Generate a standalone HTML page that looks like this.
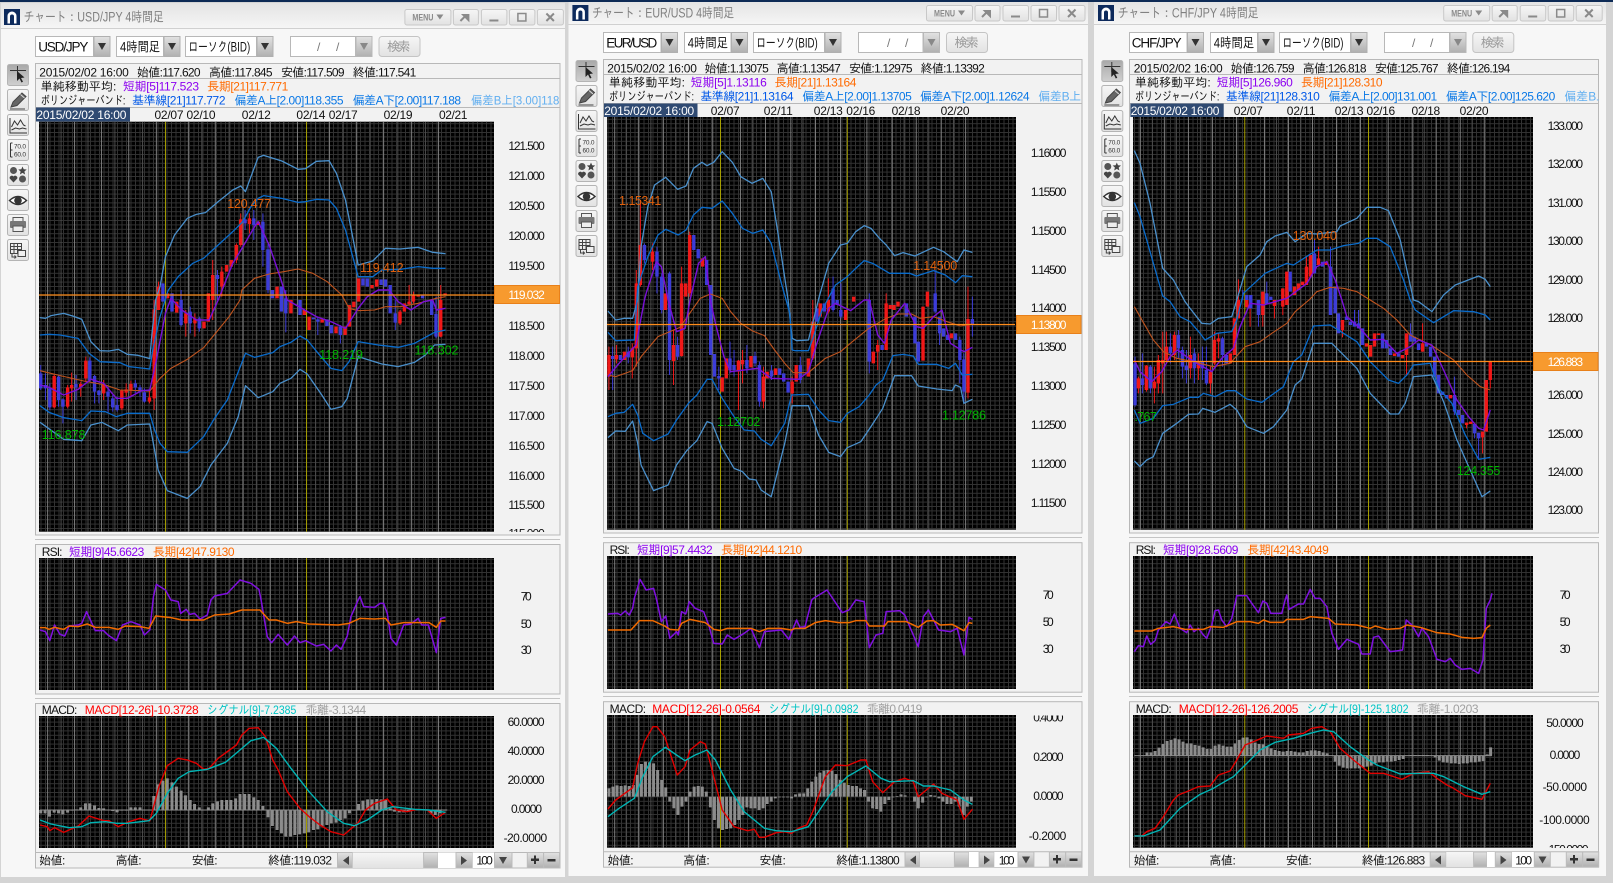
<!DOCTYPE html>
<html lang="ja"><head><meta charset="utf-8"><title>チャート</title>
<style>
html,body{margin:0;padding:0;background:#d4d4d4;overflow:hidden}
svg{display:block}
text{font-family:"Liberation Sans","IPAGothic","Noto Sans CJK JP",sans-serif;font-size:12px;fill:#111}
.l{fill:none;vector-effect:non-scaling-stroke;stroke-width:1.3;stroke-linejoin:round}
.b2{stroke:#4a90cc}.a{stroke:#0a6ccc}.m{stroke:#c0541e;stroke-width:1.1}.p{stroke:#7a10d8;stroke-width:1.4}
.rs{stroke:#8010e0;stroke-width:1.5}.rl{stroke:#f06a00;stroke-width:1.5}.mr{stroke:#e00000;stroke-width:1.4}.mc{stroke:#00b4b4;stroke-width:1.4}
.h{stroke:#8c8c8c;stroke-width:3;fill:none;vector-effect:non-scaling-stroke}
.rw{stroke:#f01818;stroke-width:1;fill:none;vector-effect:non-scaling-stroke}
.rb{stroke:#f01818;stroke-width:3.4;fill:none;vector-effect:non-scaling-stroke}
.bw{stroke:#3c3cd8;stroke-width:1;fill:none;vector-effect:non-scaling-stroke}
.bb{stroke:#3c3cd8;stroke-width:3.4;fill:none;vector-effect:non-scaling-stroke}
.v1{stroke:#7c7c7c;stroke-width:1;fill:none;vector-effect:non-scaling-stroke}
.v2{stroke:#4c4c4c;stroke-width:1;fill:none;vector-effect:non-scaling-stroke}
.vy{stroke:#a8a000;stroke-width:1;fill:none;vector-effect:non-scaling-stroke}
.pl{stroke:#ff8c1a;stroke-width:1.3;fill:none}
.pn{fill:#f2f2f2;stroke:#b8b8b8;stroke-width:1}
.sep{stroke:#c4c4c4;stroke-width:1}
.white{fill:#fff;stroke:#b8b8b8}
.pu{fill:#8c00f0}.or{fill:#ff6a00}.bl{fill:#0058e8}.ba{fill:#0a78e6}.bb2{fill:#60aef0}
.red{fill:#ff0000}.cy{fill:#00c4c4}.gy{fill:#a0a0a0}
.lo{fill:#e0600c;font-size:12.5px}.lg{fill:#00b400;font-size:12.5px}
.tt{fill:#808080;font-size:13.5px}
.wt{fill:#fff}
.dis{fill:#999;font-size:13px}
.cb{font-size:13.5px}
</style></head><body>
<svg xmlns="http://www.w3.org/2000/svg" width="1613" height="883" viewBox="0 0 1613 883">
<defs>
<pattern id="g" width="4.5" height="4.4" patternUnits="userSpaceOnUse"><path d="M0 .5H4.5M.5 0V4.4" stroke="#323232" stroke-width="1" fill="none"/></pattern>
<linearGradient id="tg" x1="0" y1="0" x2="0" y2="1"><stop offset="0" stop-color="#e4e4e4"/><stop offset="1" stop-color="#f5f5f5"/></linearGradient>
<linearGradient id="bg" x1="0" y1="0" x2="0" y2="1"><stop offset="0" stop-color="#e2e2e2"/><stop offset="1" stop-color="#b0b0b0"/></linearGradient>
<linearGradient id="lg" x1="0" y1="0" x2="0" y2="1"><stop offset="0" stop-color="#f6f6f6"/><stop offset="1" stop-color="#e2e2e2"/></linearGradient>
<linearGradient id="pg" x1="0" y1="0" x2="0" y2="1"><stop offset="0" stop-color="#a8a8a8"/><stop offset="1" stop-color="#d0d0d0"/></linearGradient>
<g id="logo"><rect width="16" height="16" fill="#0d2a5c"/><path d="M3.5 14.5V7a4.5 4.5 0 0 1 9 0v7.500h-2.500V7.500a2 2 0 0 0-4 0V14.500z" fill="#fff"/></g>
<g id="tb">
<g fill="url(#lg)" stroke="#c8c8c8"><rect x=".5" y=".5" width="46" height="15.500" rx="2"/><rect x="49" y=".5" width="25" height="15.500" rx="2"/><rect x="77" y=".5" width="25.500" height="15.500" rx="2"/><rect x="105" y=".5" width="25.500" height="15.500" rx="2"/><rect x="133" y=".5" width="26" height="15.500" rx="2"/></g>
<text x="8" y="11.500" textLength="21" lengthAdjust="spacingAndGlyphs" style="font-size:9px;font-weight:bold;fill:#8a8a8a">MENU</text>
<path d="M32 5.500h7l-3.500 5z" fill="#8a8a8a"/>
<path d="M56 12l5-5m-2-1l5 0 0 5z" stroke="#8a8a8a" stroke-width="2" fill="#8a8a8a"/>
<path d="M85 11.500h9" stroke="#8a8a8a" stroke-width="2"/>
<rect x="113.500" y="4.500" width="8" height="7.500" fill="none" stroke="#8a8a8a" stroke-width="1.500"/>
<path d="M142 4.500l7.500 7.500m0-7.500l-7.500 7.500" stroke="#8a8a8a" stroke-width="2"/>
</g>
<g id="dn"><rect x=".5" y=".5" width="16" height="20" fill="url(#bg)" stroke="#b0b0b0"/><path d="M4.500 7h8l-4 7z" fill="#333"/></g>
<g id="dnd"><rect x=".5" y=".5" width="16" height="20" fill="url(#bg)" stroke="#b8b8b8"/><path d="M4.500 7h8l-4 7z" fill="#888"/></g>
<g id="srch"><rect x=".5" y=".5" width="41" height="20" rx="3" fill="url(#lg)" stroke="#c4c4c4"/></g>
<g id="tools" fill="none">
<g stroke="#b4b4b4"><rect x=".5" y=".5" width="21" height="21" rx="2" fill="url(#pg)"/><rect x=".5" y="25.500" width="21" height="21" rx="2" fill="url(#lg)"/><rect x=".5" y="50.500" width="21" height="21" rx="2" fill="url(#lg)"/><rect x=".5" y="75.500" width="21" height="21" rx="2" fill="url(#lg)"/><rect x=".5" y="100.500" width="21" height="21" rx="2" fill="url(#lg)"/><rect x=".5" y="125.500" width="21" height="21" rx="2" fill="url(#lg)"/><rect x=".5" y="150.500" width="21" height="21" rx="2" fill="url(#lg)"/><rect x=".5" y="175.500" width="21" height="21" rx="2" fill="url(#lg)"/></g>
<path d="M3 6.500H19M10.500 2V12" stroke="#333"/><path d="M10 7l0 10 2.500-2.500 2 4 1.500-.8-2-3.700 3.500-.5z" fill="#222"/>
<path d="M4 43l2-5L15 29l4 3.500-9 9zM3 45H18" fill="#666" stroke="#444"/><path d="M13.500 30.500l4 3.500" stroke="#ddd"/>
<path d="M3 54V69H20" stroke="#333"/><path d="M4.500 63l3-6 3 4 3-5 3 5 2 1M4.500 66l4-2 4 1 3-1 4 1" stroke="#333" stroke-width="1"/>
<path d="M3.500 79V93M3.500 79h2M3.500 86h2M3.500 93h2" stroke="#333"/>
<text x="7" y="84.500" style="font-size:6.500px;fill:#333" textLength="12">70.0</text><text x="7" y="92.500" style="font-size:6.500px;fill:#333" textLength="12">60.0</text>
<circle cx="6.500" cy="106.500" r="3.500" fill="#555"/><path d="M15.500 102.500l1.200 2.800 3 .2-2.300 2 .7 3-2.600-1.600-2.600 1.600.7-3-2.300-2 3-.2z" fill="#444"/><path d="M6.500 118.500l-3.800-4a2.200 2.200 0 0 1 3.800-2 2.200 2.200 0 0 1 3.800 2z" fill="#444"/><circle cx="15.500" cy="115" r="3.500" fill="#555"/>
<path d="M2.500 136.500q8.500-8 17 0q-8.500 8-17 0z" fill="#fff" stroke="#333" stroke-width="1.500"/><circle cx="11" cy="136.500" r="3.800" fill="#333"/>
<path d="M6 157v-3.500h10V157" fill="#eee" stroke="#555"/><rect x="3" y="157" width="16" height="7" rx="1" fill="#777"/><rect x="6" y="162" width="10" height="5.500" fill="#eee" stroke="#555"/>
<g stroke="#444"><path d="M3.500 179.500h11v10h-11zM3.500 182.500h11M3.500 185.500h11M7 179.500v10M10.500 179.500v10"/><rect x="11" y="186.500" width="7.500" height="6" fill="#eee"/><path d="M5 190v3h4m-1.500-1.500l1.500 1.500-1.500 1.500"/></g>
</g>
<clipPath id="c1"><rect x="39" y="121.700" width="455" height="410"/><rect x="39" y="558" width="455" height="132"/><rect x="39" y="716" width="455" height="132"/></clipPath>
<clipPath id="c2"><rect x="607" y="117" width="409" height="412.700"/><rect x="607" y="556" width="409" height="133"/><rect x="607" y="715" width="409" height="132.700"/></clipPath>
<clipPath id="c3"><rect x="1133" y="117" width="400" height="412.700"/><rect x="1133" y="556" width="400" height="133"/><rect x="1133" y="715" width="400" height="132.700"/></clipPath>
<clipPath id="k1"><rect x="495" y="520" width="65" height="12"/></clipPath>
<clipPath id="k2"><rect x="1020" y="715.500" width="60" height="12"/></clipPath>
<clipPath id="k3"><rect x="1535" y="840" width="60" height="8"/></clipPath>
<clipPath id="k4"><rect x="1550" y="90" width="48.500" height="16"/></clipPath>
</defs>

<rect width="1613" height="883" fill="#d4d4d4"/>
<rect width="1613" height="2" fill="#0d2a55"/>

<!-- ========== WINDOW 1 ========== -->
<rect x="1" y="3" width="564" height="874" fill="#f7f7f7"/>
<rect x="1" y="3" width="564" height="25" fill="url(#tg)"/><path d="M1 28.500H565" stroke="#d0d0d0"/>
<use href="#logo" x="4" y="9"/>
<text class="tt" x="23.600" y="21.500" textLength="140" lengthAdjust="spacingAndGlyphs">チャート：USD/JPY 4時間足</text>
<use href="#tb" x="404.400" y="9"/>
<rect class="white" x="35.500" y="36.500" width="58" height="20"/><use href="#dn" x="93.500" y="36"/><text class="cb" x="38.200" y="51.500" textLength="50.200">USD/JPY</text>
<rect class="white" x="116.500" y="36.500" width="47" height="20"/><use href="#dn" x="163.500" y="36"/><text class="cb" x="120" y="51.500" textLength="40" lengthAdjust="spacingAndGlyphs">4時間足</text>
<rect class="white" x="185.500" y="36.500" width="71" height="20"/><use href="#dn" x="256.500" y="36"/><text class="cb" x="188.400" y="51.500" textLength="61.800" lengthAdjust="spacingAndGlyphs">ローソク(BID)</text>
<rect class="white" x="290.500" y="36.500" width="65" height="20"/><use href="#dnd" x="355.500" y="36"/><text x="317" y="51" fill="#777" style="fill:#777">/</text><text x="336" y="51" style="fill:#777">/</text>
<use href="#srch" x="378.500" y="36"/><text class="dis" x="387.300" y="51" textLength="23">検索</text>
<use href="#tools" x="7" y="64"/>

<rect class="pn" x="35.500" y="63.500" width="524.500" height="471.500"/>
<path d="M35.500 78.500H560M35.500 107.500H560" stroke="#b8b8b8"/>
<path class="sep" d="M35 539.500H560M35 698.500H560"/>
<rect class="pn" x="35.500" y="544.500" width="524.500" height="149.500"/>
<rect class="pn" x="35.500" y="703.500" width="524.500" height="164.500"/>
<path d="M35.500 852.500H560" stroke="#b8b8b8"/>
<rect x="36" y="107.500" width="94" height="14" fill="#2f4a72"/>
<g fill="#000"><rect x="39" y="121.700" width="455" height="410"/><rect x="39" y="558" width="455" height="132"/><rect x="39" y="716" width="455" height="132"/></g>
<g fill="url(#g)"><rect x="39" y="121.700" width="455" height="410"/><rect x="39" y="558" width="455" height="132"/><rect x="39" y="716" width="455" height="132"/></g>
<g clip-path="url(#c1)"><g transform="scale(.363636,.333333)">
<path class="v2" d="M168 365V2544M242 365V2544M316 365V2544M392 365V2544M555 365V2544M630 365V2544M705 365V2544M780 365V2544M868 365V2544M944 365V2544M1018 365V2544M1094 365V2544M1170 365V2544"/>
<path class="v1" d="M131 365V2544M205 365V2544M279 365V2544M354 365V2544M430 365V2544M518 365V2544M592 365V2544M668 365V2544M743 365V2544M818 365V2544M906 365V2544M981 365V2544M1055 365V2544M1132 365V2544M1206 365V2544"/>
<path class="vy" d="M455 365V2544M843 365V2544"/>
<path class="rw" d="M149 1122V1225M186 1155V1225M197 1118V1205M222 1145V1190M236 1070V1145M285 1140V1200M335 1168V1230M347 1150V1190M360 1142V1190M411 1170V1210M424 900V1230M436 845V930M585 780V960M610 800V890M650 730V790M662 640V740M686 640V700M1125 855V915M1137 875V910M1212 855V1012M1100 930V975M511 930V1010M536 940V1010"/>
<path class="bw" d="M112 1095V1170M125 1120V1200M137 1150V1230M161 1125V1220M173 1195V1270M209 1125V1200M247 1072V1145M260 1125V1210M272 1170V1210M297 1160V1235M310 1185V1235M322 1190V1235M372 1140V1180M385 1155V1190M397 1165V1208M498 870V980M523 920V1000M548 950V995M598 810V900M674 630V690M698 630V720M723 640V800M737 730V880M786 870V997M874 950V1005M936 975V1030M1087 900V990M1199 890V1015"/>
<path class="bb" d="M112 1120V1165M125 1155V1165M137 1165V1222M161 1130V1200M173 1198V1220M209 1152V1162M247 1082V1140M260 1128V1175M272 1172V1185M297 1175V1190M310 1195V1222M322 1215V1230M372 1150V1162M385 1162V1175M397 1177V1205M448 850V905M473 880V935M498 900V975M523 935V970M548 955V985M598 825V837M674 658V670M698 655V675M723 665V750M737 748V870M749 870V895M774 860V935M786 895V940M825 900V945M862 953V958M874 958V965M899 958V978M911 975V1000M936 980V1005M998 835V857M1010 835V860M1048 838V855M1060 838V860M1073 855V940M1087 940V968M1162 885V895M1187 900V945M1199 942V1010"/>
<path class="rb" d="M149 1128V1222M186 1162V1220M197 1155V1165M222 1152V1162M236 1082V1135M285 1155V1180M335 1172V1225M347 1168V1178M360 1152V1172M411 1192V1205M424 928V1195M436 860V930M461 880V895M486 905V938M511 940V970M536 955V970M561 965V985M573 880V965M585 825V900M610 815V860M623 795V815M636 780V800M650 735V780M662 658V735M686 655V672M711 665V675M762 860V895M800 900V940M837 930V945M850 950V990M886 958V968M924 980V1000M949 980V1005M961 915V980M973 905V922M986 835V905M1023 855V865M1036 838V860M1100 935V970M1112 910V935M1125 905V912M1137 885V905M1150 885V890M1212 900V1010M1224 880V885"/>
<polyline class="l b2" points="110,953 125,955 140,947 175,940 200,948 225,958 250,1025 275,1052 300,1053 325,1048 350,1063 380,1066 412,1076 418,1000 428,900 440,860 455,770 480,705 515,655 540,643 565,638 600,605 640,570 662,558 675,575 690,530 710,472 725,466 775,483 820,508 840,506 870,484 905,482 925,520 950,600 985,795 1025,783 1060,745 1100,747 1150,742 1190,757 1225,761"/>
<polyline class="l a" points="110,1005 135,1003 165,1005 215,1015 245,1060 275,1085 330,1088 355,1100 412,1107 420,1050 440,950 462,872 490,830 530,790 560,775 600,735 640,695 665,668 675,650 690,620 710,595 725,587 775,595 820,607 840,605 870,598 905,600 925,625 950,690 985,830 1025,830 1050,810 1100,808 1150,800 1190,805 1225,805"/>
<polyline class="l m" points="110,1112 170,1128 230,1143 290,1155 330,1170 412,1173 440,1135 470,1105 515,1078 560,1043 600,990 630,950 660,900 665,870 700,835 740,822 780,815 820,807 860,820 900,845 940,885 960,925 985,932 1030,930 1060,920 1100,920 1150,910 1200,895 1225,890"/>
<polyline class="l a" points="110,1217 135,1237 175,1253 225,1262 250,1233 290,1235 320,1250 350,1240 412,1240 425,1290 440,1330 460,1355 515,1357 560,1310 590,1255 625,1200 650,1130 675,1060 700,1072 750,1058 770,1040 800,1027 825,1008 845,1020 875,1060 910,1105 940,1112 960,1085 985,1025 1040,1035 1095,1042 1140,1030 1195,997 1225,990"/>
<polyline class="l b2" points="110,1267 175,1318 225,1322 250,1275 280,1267 325,1292 350,1275 412,1272 435,1410 460,1472 515,1495 550,1460 580,1395 625,1330 655,1250 675,1157 710,1193 750,1175 770,1150 800,1135 825,1108 845,1122 885,1185 910,1228 940,1220 955,1195 985,1070 1050,1092 1095,1100 1140,1087 1170,1065 1195,1035 1225,1033"/>
<polyline class="l p" points="110,1155 135,1162 175,1185 215,1168 250,1138 285,1150 320,1195 350,1195 390,1172 412,1170 430,1080 455,940 470,895 500,930 540,960 575,960 600,900 640,790 660,755 700,680 710,665 740,735 770,830 790,900 830,925 870,950 910,965 950,985 985,925 1010,890 1040,870 1070,870 1095,905 1130,930 1165,905 1190,900 1200,930 1225,925"/>
<polyline class="l rs" points="110,1890 125,1895 137,1922 150,1875 165,1903 178,1908 190,1878 215,1875 225,1870 238,1835 262,1892 285,1892 297,1905 320,1922 337,1875 360,1865 385,1875 397,1905 412,1890 422,1790 430,1753 455,1770 470,1800 490,1805 497,1840 512,1828 522,1843 535,1840 550,1857 570,1845 580,1800 590,1788 625,1780 660,1740 690,1750 712,1768 718,1800 735,1910 747,1928 765,1903 790,1935 810,1908 825,1928 840,1922 870,1938 890,1933 910,1953 925,1935 938,1948 955,1908 965,1850 985,1800 990,1790 1000,1820 1030,1822 1045,1810 1055,1810 1065,1840 1075,1915 1090,1935 1110,1875 1130,1872 1150,1855 1160,1875 1178,1875 1200,1958 1212,1855 1225,1852"/>
<g transform="translate(0,1800)">
<polyline class="l rl" points="110,83 125,83 135,88 150,82 175,88 190,78 215,80 240,72 262,82 300,82 325,88 345,78 385,80 410,85 428,48 470,53 500,60 560,60 590,45 630,42 665,30 715,30 740,60 760,60 790,70 815,65 850,72 930,75 960,70 990,55 1030,57 1060,55 1075,75 1110,68 1180,68 1200,82 1212,63 1225,63"/>
<path class="h" d="M112 630V640M124 630V640M136 630V650M149 630V638M161 630V640M173 630V643M186 630V638M198 630V632M210 630V628M222 630V622M235 630V610M247 630V610M260 630V616M272 630V624M285 630V625M297 630V631M310 630V633M322 630V637M335 630V632M347 630V632M360 630V622M372 630V622M385 630V622M397 630V630M410 630V630M423 630V588M435 630V553M448 630V542M460 630V535M473 630V547M485 630V560M498 630V572M510 630V586M523 630V600M535 630V612M548 630V622M560 630V630M573 630V622M585 630V610M598 630V604M610 630V600M623 630V600M635 630V600M648 630V595M660 630V582M673 630V582M685 630V582M698 630V592M710 630V600M723 630V618M737 630V652M749 630V678M762 630V690M774 630V700M786 630V710M799 630V710M811 630V705M824 630V703M837 630V700M849 630V697M862 630V690M874 630V688M886 630V680M899 630V675M911 630V670M924 630V668M936 630V660M949 630V655M961 630V640M973 630V632M986 630V612M998 630V602M1011 630V598M1023 630V598M1036 630V597M1048 630V598M1060 630V600M1073 630V625M1085 630V635M1098 630V637M1110 630V637M1123 630V635M1135 630V632M1172 630V632M1185 630V640M1197 630V645M1210 630V640M1222 630V632"/>
<path class="h" style="stroke-width:1" d="M110 630H1230"/>
<polyline class="l mr" points="110,675 130,680 137,692 150,683 175,697 215,678 245,648 285,662 300,662 325,680 355,665 385,655 412,663 437,560 460,497 490,475 515,480 540,490 560,508 575,505 600,475 650,435 665,405 685,385 710,383 730,410 750,480 765,510 790,575 825,625 850,650 880,675 910,695 945,705 985,668 1005,630 1030,610 1065,597 1090,630 1120,635 1145,628 1175,630 1200,655 1225,637"/>
<polyline class="l mc" points="110,660 140,672 190,683 225,680 250,668 290,665 320,670 350,670 410,662 430,640 460,580 490,535 520,515 570,508 620,487 660,450 690,422 725,412 760,445 800,505 850,575 900,635 945,670 975,677 1010,660 1050,630 1080,620 1140,628 1180,630 1225,637"/>
</g></g></g>
<path class="pl" d="M39 295H494"/>
<rect x="494.500" y="285.500" width="65" height="18" fill="#f79a2e" stroke="#e8801a"/>
<text class="wt" x="508.400" y="299" textLength="36.400" style="fill:#fff">119.032</text>
<text class="lo" x="227.300" y="208" textLength="43.600">120.477</text><text class="lo" x="360" y="272" textLength="43.600">119.412</text>
<text class="lg" x="319.300" y="359" textLength="43.600">118.219</text><text class="lg" x="414.500" y="354.500" textLength="44">118.302</text><text class="lg" x="41.800" y="439" textLength="43.600">116.878</text>
<text x="39.300" y="76.500" textLength="89.500">2015/02/02 16:00</text><text x="137" y="76.500" textLength="63.600">始値:117.620</text><text x="209" y="76.500" textLength="63.600">高値:117.845</text><text x="281" y="76.500" textLength="63.600">安値:117.509</text><text x="352.700" y="76.500" textLength="63.600">終値:117.541</text>
<text x="40.700" y="90.500" textLength="75.600">単純移動平均:</text><text class="pu" x="123" y="90.500" textLength="76">短期[5]117.523</text><text class="or" x="207.300" y="90.500" textLength="81">長期[21]117.771</text>
<text x="40.700" y="104.500" textLength="84.700" lengthAdjust="spacingAndGlyphs">ボリンジャーバンド:</text><text class="bl" x="132" y="104.500" textLength="93.500">基準線[21]117.772</text><text class="ba" x="234.500" y="104.500" textLength="109">偏差A上[2.00]118.355</text><text class="ba" x="352.700" y="104.500" textLength="108.400">偏差A下[2.00]117.188</text><text class="bb2" x="471" y="104.500" textLength="88.400" lengthAdjust="spacingAndGlyphs">偏差B上[3.00]118</text>
<text class="wt" x="36.400" y="119" textLength="90">2015/02/02 16:00</text><text x="154.500" y="119" textLength="29">02/07</text><text x="186.500" y="119" textLength="29">02/10</text><text x="241.800" y="119" textLength="29">02/12</text><text x="296.400" y="119" textLength="29">02/14</text><text x="328.700" y="119" textLength="29">02/17</text><text x="383.600" y="119" textLength="29">02/19</text><text x="439" y="119" textLength="28.400">02/21</text>
<text x="508.400" y="150.200" textLength="36.400">121.500</text><text x="508.400" y="180.200" textLength="36.400">121.000</text><text x="508.400" y="210.200" textLength="36.400">120.500</text><text x="508.400" y="240.200" textLength="36.400">120.000</text><text x="508.400" y="270.200" textLength="36.400">119.500</text><text x="508.400" y="330.200" textLength="36.400">118.500</text><text x="508.400" y="360.200" textLength="36.400">118.000</text><text x="508.400" y="390.200" textLength="36.400">117.500</text><text x="508.400" y="420.200" textLength="36.400">117.000</text><text x="508.400" y="450.200" textLength="36.400">116.500</text><text x="508.400" y="480.200" textLength="36.400">116.000</text><text x="508.400" y="508.800" textLength="36.400">115.500</text><text clip-path="url(#k1)" x="508.400" y="537.500" textLength="36.400">115.000</text>
<text x="41.800" y="556" textLength="20.700">RSI:</text><text class="pu" x="69" y="556" textLength="75.300">短期[9]45.6623</text><text class="or" x="153" y="556" textLength="81.500">長期[42]47.9130</text>
<text x="520.700" y="600.500" textLength="11">70</text><text x="520.700" y="627.800" textLength="11">50</text><text x="520.700" y="653.800" textLength="11">30</text>
<text x="41.800" y="714" textLength="35.600">MACD:</text><text class="red" x="84.700" y="714" textLength="114">MACD[12-26]-10.3728</text><text class="cy" x="207.300" y="714" textLength="89" lengthAdjust="spacingAndGlyphs">シグナル[9]-7.2385</text><text class="gy" x="305.500" y="714" textLength="60.700">乖離-3.1344</text>
<text x="507.600" y="726.200" textLength="37">60.0000</text><text x="507.600" y="755.200" textLength="37">40.0000</text><text x="507.600" y="783.800" textLength="37">20.0000</text><text x="511" y="813.200" textLength="31">0.0000</text><text x="503.600" y="841.800" textLength="43.600">-20.0000</text>
<text x="39.300" y="864.500" textLength="26">始値:</text><text x="115.600" y="864.500" textLength="26">高値:</text><text x="191.600" y="864.500" textLength="26">安値:</text><text x="268" y="864.500" textLength="64">終値:119.032</text>
<g stroke="#bcbcbc"><rect x="337.500" y="852.500" width="15" height="15.500" fill="url(#bg)"/><rect x="352.700" y="852.500" width="71" height="15.500" fill="url(#lg)" stroke="none"/><rect x="423.600" y="852.500" width="14.500" height="15.500" fill="url(#bg)"/><rect x="438" y="852.500" width="18" height="15.500" fill="#fff" stroke="none"/><rect x="456" y="852.500" width="16.700" height="15.500" fill="url(#bg)"/><rect x="472.700" y="852.500" width="21.800" height="15.500" fill="#fff" stroke="none"/><rect x="494.500" y="852.500" width="17.500" height="15.500" fill="url(#bg)"/><rect x="527.300" y="852.500" width="16.300" height="15.500" fill="url(#bg)"/><rect x="543.600" y="852.500" width="15.900" height="15.500" fill="url(#bg)"/></g>
<path d="M349 856l-6 4.500 6 4.500zM461 856l6 4.500-6 4.500zM499 857h8l-4 7z" fill="#444"/><path d="M531 858.500h3v-3h2v3h3v2.500h-3v3h-2v-3h-3zM547.500 859h8v2.500h-8z" fill="#333"/>
<text x="476.400" y="864.500" textLength="16.400">100</text>

<!-- ========== WINDOW 2 ========== -->
<rect x="568.500" y="2" width="519.500" height="874" fill="#f7f7f7"/>
<rect x="568.500" y="2" width="519.500" height="22" fill="url(#tg)"/><path d="M568.500 24.500H1088" stroke="#d0d0d0"/>
<use href="#logo" x="572.400" y="5"/>
<text class="tt" x="592" y="17.500" textLength="142" lengthAdjust="spacingAndGlyphs">チャート：EUR/USD 4時間足</text>
<use href="#tb" x="926" y="5"/>
<rect class="white" x="603.500" y="32.500" width="57.500" height="20"/><use href="#dn" x="661" y="32"/><text class="cb" x="606.200" y="47.500" textLength="51">EUR/USD</text>
<rect class="white" x="684.500" y="32.500" width="46.500" height="20"/><use href="#dn" x="731" y="32"/><text class="cb" x="687.700" y="47.500" textLength="40.200" lengthAdjust="spacingAndGlyphs">4時間足</text>
<rect class="white" x="753.500" y="32.500" width="71" height="20"/><use href="#dn" x="824.500" y="32"/><text class="cb" x="756.300" y="47.500" textLength="61.500" lengthAdjust="spacingAndGlyphs">ローソク(BID)</text>
<rect class="white" x="858.500" y="32.500" width="64.500" height="20"/><use href="#dnd" x="923" y="32"/><text x="887" y="47" style="fill:#777">/</text><text x="905" y="47" style="fill:#777">/</text>
<use href="#srch" x="946" y="32"/><text class="dis" x="954.800" y="47" textLength="23.700">検索</text>
<use href="#tools" x="575.500" y="60"/>

<rect class="pn" x="603.500" y="59.500" width="478.500" height="473.500"/>
<path d="M603.500 74.500H1082M603.500 103.500H1082" stroke="#b8b8b8"/>
<path class="sep" d="M603 537.500H1082M603 696.500H1082"/>
<rect class="pn" x="603.500" y="542.700" width="478.500" height="149.500"/>
<rect class="pn" x="603.500" y="701.700" width="478.500" height="165.500"/>
<path d="M603.500 851.700H1082" stroke="#b8b8b8"/>
<rect x="604" y="103.500" width="93.500" height="13.500" fill="#2f4a72"/>
<g fill="#000"><rect x="607" y="117" width="409" height="412.700"/><rect x="607" y="556" width="409" height="133"/><rect x="607" y="715" width="409" height="132.700"/></g>
<g fill="url(#g)"><rect x="607" y="117" width="409" height="412.700"/><rect x="607" y="556" width="409" height="133"/><rect x="607" y="715" width="409" height="132.700"/></g>
<g clip-path="url(#c2)"><g transform="translate(565,0) scale(.33807,.333333)">
<path class="v2" d="M182 351V2544M254 351V2544M328 351V2544M401 351V2544M556 351V2544M630 351V2544M704 351V2544M778 351V2544M930 351V2544M1003 351V2544M1076 351V2544M1149 351V2544"/>
<path class="v1" d="M147 351V2544M217 351V2544M291 351V2544M365 351V2544M437 351V2544M519 351V2544M593 351V2544M668 351V2544M741 351V2544M815 351V2544M893 351V2544M968 351V2544M1039 351V2544M1113 351V2544M1185 351V2544"/>
<path class="vy" d="M460 351V2544M835 351V2544"/>
<path class="rw" d="M130 1040V1170M152 1035V1090M199 1030V1135M211 810V1100M223 600V860M259 730V810M321 990V1155M345 800V1070M369 695V890M513 1080V1230M525 1050V1150M587 1100V1225M672 1130V1210M733 900V1080M779 835V940M925 1020V1110M950 880V1050M1192 860V1195"/>
<path class="bw" d="M141 1040V1170M187 1040V1090M235 730V790M272 740V880M286 820V940M309 815V1125M333 1010V1080M455 1100V1170M488 1025V1120M500 1050V1130M538 1035V1120M562 1055V1100M575 1085V1220M611 1095V1140M696 1070V1150M793 830V935M816 850V955M900 880V1120M1095 810V940M1108 960V1035M1168 1010V1150M1180 1060V1210M1205 890V1010"/>
<path class="bb" d="M141 1068V1077M164 1065V1080M187 1055V1072M235 735V780M272 755V830M286 830V930M309 820V1080M333 1035V1070M381 705V750M394 747V775M419 780V855M431 855V1065M442 1062V1130M455 1128V1135M488 1075V1110M500 1095V1110M538 1080V1105M562 1068V1090M575 1095V1205M611 1112V1130M635 1105V1125M647 1120V1145M660 1145V1178M696 1095V1140M745 925V965M767 910V935M793 865V930M805 900V915M816 930V950M900 900V1085M938 1035V1050M1010 910V950M1035 950V1030M1045 1025V1085M1095 880V935M1108 950V1000M1120 985V1010M1132 1005V1020M1155 1000V1020M1168 1020V1080M1180 1078V1175M1205 957V975"/>
<path class="rb" d="M130 1065V1130M152 1065V1078M176 1055V1080M199 1045V1072M211 850V1045M223 735V855M259 755V785M297 880V930M321 1035V1083M345 850V1068M357 850V890M369 705V880M407 775V800M465 1132V1175M477 1075V1135M513 1082V1115M525 1080V1093M550 1068V1102M587 1130V1205M598 1115V1135M623 1105V1125M672 1145V1180M684 1095V1145M720 1075V1130M733 965V1075M755 910V950M779 900V935M830 930V960M854 890V905M912 1055V1090M925 1035V1055M950 910V1050M962 915V927M973 915V930M985 905V920M1059 920V1082M1072 875V920M1143 1000V1015M1192 957V1178"/>
<polyline class="l b2" points="127,933 150,960 175,955 200,955 215,900 225,740 245,620 265,555 298,532 333,568 358,558 380,505 405,487 420,497 440,487 465,455 495,487 520,530 553,550 585,535 610,575 630,700 660,900 665,950 672,1015 685,1022 720,1020 735,960 752,890 780,790 815,735 835,730 860,695 885,677 905,685 930,715 950,735 975,767 1000,758 1035,768 1090,742 1120,755 1160,785 1180,750 1205,757"/>
<polyline class="l a" points="127,997 150,1022 205,1020 215,860 245,770 275,705 298,688 335,705 358,690 380,645 405,622 435,625 465,603 495,640 525,685 555,700 585,690 610,730 640,850 665,940 672,1050 680,1052 720,1052 735,1010 760,930 800,855 835,830 860,805 885,782 910,790 935,805 960,820 1020,820 1040,828 1090,812 1125,825 1155,848 1175,827 1205,830"/>
<polyline class="l m" points="127,1125 150,1130 200,1112 225,1070 275,1010 340,982 400,895 430,882 465,895 490,935 520,970 555,993 590,1007 620,1050 650,1090 675,1118 720,1118 770,1075 815,1055 850,1025 895,988 950,955 985,942 1025,942 1050,955 1090,950 1130,965 1170,978 1205,972"/>
<polyline class="l a" points="127,1250 150,1240 175,1237 200,1213 215,1245 230,1300 262,1322 305,1302 330,1260 365,1210 390,1185 420,1138 435,1138 465,1195 500,1250 530,1290 560,1293 580,1318 610,1337 650,1270 670,1185 720,1183 750,1230 780,1262 815,1267 835,1240 870,1220 900,1185 920,1155 940,1140 970,1067 1000,1063 1030,1068 1045,1093 1100,1093 1135,1105 1155,1090 1175,1125 1205,1123"/>
<polyline class="l b2" points="127,1313 150,1293 178,1294 200,1263 215,1330 225,1395 262,1472 305,1455 330,1395 360,1352 390,1322 420,1265 435,1270 465,1345 500,1405 525,1415 545,1437 565,1440 580,1470 610,1490 650,1330 672,1217 720,1217 750,1305 780,1357 815,1370 835,1343 875,1325 905,1280 940,1225 975,1127 1025,1127 1045,1158 1100,1167 1145,1172 1155,1155 1170,1162 1180,1210 1205,1198"/>
<polyline class="l p" points="127,1130 160,1090 210,1035 235,900 240,880 270,785 285,800 305,900 330,995 355,985 370,900 395,790 415,770 430,900 445,970 470,1070 490,1115 570,1105 610,1135 690,1138 720,1115 745,1030 780,925 800,910 845,932 885,900 900,900 925,1005 945,1030 965,960 1005,910 1040,980 1060,985 1090,950 1115,930 1140,1030 1180,1055 1205,1042"/>
<polyline class="l rs" points="127,1842 155,1840 165,1845 178,1833 190,1845 200,1825 205,1795 222,1738 240,1770 262,1765 270,1795 285,1865 298,1848 310,1915 330,1895 335,1905 345,1835 357,1842 368,1805 385,1825 410,1835 425,1875 440,1930 465,1932 480,1905 500,1918 530,1900 550,1885 575,1943 590,1895 640,1890 662,1918 685,1860 695,1882 710,1880 730,1800 735,1795 775,1770 795,1800 820,1838 840,1830 860,1800 885,1805 900,1943 920,1905 940,1900 950,1835 990,1832 1005,1845 1045,1940 1060,1850 1075,1830 1105,1890 1140,1895 1160,1885 1180,1965 1195,1852 1205,1858"/>
<g transform="translate(0,1800)">
<polyline class="l rl" points="127,90 195,90 220,62 260,62 295,78 310,88 335,90 345,70 370,58 415,68 440,88 460,92 480,85 550,85 575,95 600,85 640,85 670,90 680,85 710,85 740,68 770,62 810,68 840,68 860,62 890,62 900,78 945,78 955,65 1010,65 1045,82 1070,63 1090,62 1110,75 1145,73 1180,92 1195,68 1205,70"/>
<path class="h" d="M130 590V565M142 590V560M154 590V556M166 590V558M178 590V556M190 590V558M202 590V555M214 590V525M226 590V492M238 590V485M250 590V487M262 590V490M274 590V510M286 590V540M298 590V562M310 590V605M322 590V625M334 590V645M346 590V620M358 590V605M370 590V575M382 590V560M394 590V558M406 590V560M418 590V575M430 590V622M442 590V660M454 590V685M466 590V690M478 590V687M490 590V685M502 590V675M514 590V660M526 590V645M538 590V622M550 590V625M562 590V625M574 590V630M586 590V625M598 590V612M610 590V605M622 590V595M634 590V592M646 590V592M658 590V592M670 590V595M682 590V583M694 590V580M706 590V580M718 590V565M730 590V545M742 590V530M754 590V518M766 590V512M778 590V510M790 590V512M802 590V522M814 590V540M826 590V548M838 590V555M850 590V558M862 590V558M874 590V565M886 590V570M898 590V605M910 590V625M922 590V627M934 590V635M946 590V612M958 590V600M970 590V592M982 590V588M994 590V583M1006 590V586M1034 590V605M1045 590V625M1058 590V608M1070 590V592M1082 590V585M1094 590V587M1106 590V595M1118 590V605M1130 590V612M1142 590V612M1154 590V605M1166 590V620M1178 590V645M1190 590V620M1202 590V605"/>
<polyline class="l mr" points="127,627 150,600 200,563 215,490 235,425 260,380 272,380 295,410 332,525 355,500 370,450 400,425 415,432 440,530 465,630 500,680 540,692 560,688 575,712 590,712 625,698 650,695 670,700 690,685 715,675 735,630 770,530 800,495 835,497 875,480 890,480 910,545 940,578 975,545 1005,535 1030,545 1045,590 1090,552 1115,580 1160,600 1180,658 1205,628"/>
<polyline class="l mc" points="127,650 160,625 205,595 230,530 260,470 297,442 330,465 355,482 385,465 420,450 445,480 490,570 530,635 590,685 625,692 670,695 720,680 750,635 790,575 835,530 890,498 935,535 960,545 1030,542 1060,558 1090,558 1140,570 1180,600 1205,613"/>
</g></g></g>
<path class="pl" d="M607 324.500H1015"/>
<rect x="1016.500" y="315.500" width="64.500" height="18" fill="#f79a2e" stroke="#e8801a"/>
<text x="1030.900" y="329" textLength="35.500" style="fill:#fff">1.13800</text>
<text class="lo" x="619" y="205" textLength="42.300">1.15341</text><text class="lo" x="913.200" y="270" textLength="44">1.14500</text>
<text class="lg" x="717" y="426" textLength="43.300">1.12702</text><text class="lg" x="942" y="419.500" textLength="44">1.12786</text>
<text x="607.300" y="72.300" textLength="89.600">2015/02/02 16:00</text><text x="704.600" y="72.300" textLength="64.200">始値:1.13075</text><text x="776.600" y="72.300" textLength="64.200">高値:1.13547</text><text x="849" y="72.300" textLength="63.600">安値:1.12975</text><text x="920.600" y="72.300" textLength="64.200">終値:1.13392</text>
<text x="609" y="86.300" textLength="76">単純移動平均:</text><text class="pu" x="690.800" y="86.300" textLength="76">短期[5]1.13116</text><text class="or" x="774.600" y="86.300" textLength="81.800">長期[21]1.13164</text>
<text x="609" y="100.300" textLength="85" lengthAdjust="spacingAndGlyphs">ボリンジャーバンド:</text><text class="bl" x="700.200" y="100.300" textLength="93.300">基準線[21]1.13164</text><text class="ba" x="802.300" y="100.300" textLength="109.500">偏差A上[2.00]1.13705</text><text class="ba" x="920" y="100.300" textLength="109.500">偏差A下[2.00]1.12624</text><text class="bb2" x="1038.300" y="100.300" textLength="43">偏差B上</text>
<text class="wt" x="604.200" y="115" textLength="90">2015/02/02 16:00</text><text x="710.700" y="115" textLength="29">02/07</text><text x="763.800" y="115" textLength="29">02/11</text><text x="813.800" y="115" textLength="29">02/13</text><text x="846.300" y="115" textLength="29">02/16</text><text x="891.600" y="115" textLength="29">02/18</text><text x="940.600" y="115" textLength="29">02/20</text>
<text x="1030.900" y="157.200" textLength="35.500">1.16000</text><text x="1030.900" y="196.200" textLength="35.500">1.15500</text><text x="1030.900" y="235.200" textLength="35.500">1.15000</text><text x="1030.900" y="274.200" textLength="35.500">1.14500</text><text x="1030.900" y="312.200" textLength="35.500">1.14000</text><text x="1030.900" y="351.200" textLength="35.500">1.13500</text><text x="1030.900" y="390.200" textLength="35.500">1.13000</text><text x="1030.900" y="429.200" textLength="35.500">1.12500</text><text x="1030.900" y="468.200" textLength="35.500">1.12000</text><text x="1030.900" y="507.200" textLength="35.500">1.11500</text>
<text x="609.600" y="554" textLength="20.300">RSI:</text><text class="pu" x="637" y="554" textLength="75.700">短期[9]57.4432</text><text class="or" x="721.200" y="554" textLength="81">長期[42]44.1210</text>
<text x="1042.700" y="599.200" textLength="11">70</text><text x="1042.700" y="626.200" textLength="11">50</text><text x="1042.700" y="653.200" textLength="11">30</text>
<text x="609.600" y="713" textLength="36.500">MACD:</text><text class="red" x="652.200" y="713" textLength="108.200">MACD[12-26]-0.0564</text><text class="cy" x="768.900" y="713" textLength="89.600" lengthAdjust="spacingAndGlyphs">シグナル[9]-0.0982</text><text class="gy" x="866.900" y="713" textLength="55.400">乖離0.0419</text>
<text clip-path="url(#k2)" x="1033.200" y="721.500" textLength="30.400">0.4000</text><text x="1033.200" y="761.200" textLength="30.400">0.2000</text><text x="1033.200" y="800.200" textLength="30.400">0.0000</text><text x="1028.800" y="840.200" textLength="37.500">-0.2000</text>
<text x="607.600" y="864.500" textLength="26">始値:</text><text x="683.300" y="864.500" textLength="26.400">高値:</text><text x="759.400" y="864.500" textLength="26.400">安値:</text><text x="836.100" y="864.500" textLength="63.600">終値:1.13800</text>
<g stroke="#bcbcbc"><rect x="905" y="852" width="15" height="15" fill="url(#bg)"/><rect x="920" y="852" width="34.400" height="15" fill="url(#lg)" stroke="none"/><rect x="954.400" y="852" width="14.600" height="15" fill="url(#bg)"/><rect x="969" y="852" width="10" height="15" fill="#fff" stroke="none"/><rect x="979.100" y="852" width="15.200" height="15" fill="url(#bg)"/><rect x="994.300" y="852" width="23.700" height="15" fill="#fff" stroke="none"/><rect x="1018" y="852" width="15.900" height="15" fill="url(#bg)"/><rect x="1049.400" y="852" width="16.300" height="15" fill="url(#bg)"/><rect x="1065.700" y="852" width="15.900" height="15" fill="url(#bg)"/></g>
<path d="M916 855.500l-6 4.500 6 4.500zM984 855.500l6 4.500-6 4.500zM1022 856.500h8l-4 7z" fill="#444"/><path d="M1053 858h3v-3h2v3h3v2.500h-3v3h-2v-3h-3zM1069.500 858.500h8v2.500h-8z" fill="#333"/>
<text x="998.700" y="864.500" textLength="15.900">100</text>

<!-- ========== WINDOW 3 ========== -->
<rect x="1094" y="2" width="512" height="874" fill="#f7f7f7"/>
<rect x="1094" y="2" width="512" height="22" fill="url(#tg)"/><path d="M1094 24.500H1606" stroke="#d0d0d0"/>
<use href="#logo" x="1098" y="5"/>
<text class="tt" x="1117.700" y="17.500" textLength="140.800" lengthAdjust="spacingAndGlyphs">チャート：CHF/JPY 4時間足</text>
<use href="#tb" x="1443.200" y="5"/>
<rect class="white" x="1129.500" y="32.500" width="57.500" height="20"/><use href="#dn" x="1187" y="32"/><text class="cb" x="1131.700" y="47.500" textLength="50">CHF/JPY</text>
<rect class="white" x="1210.500" y="32.500" width="47" height="20"/><use href="#dn" x="1257.500" y="32"/><text class="cb" x="1213.700" y="47.500" textLength="40.400" lengthAdjust="spacingAndGlyphs">4時間足</text>
<rect class="white" x="1279.500" y="32.500" width="71" height="20"/><use href="#dn" x="1350.500" y="32"/><text class="cb" x="1282.500" y="47.500" textLength="61" lengthAdjust="spacingAndGlyphs">ローソク(BID)</text>
<rect class="white" x="1384.500" y="32.500" width="65" height="20"/><use href="#dnd" x="1449.500" y="32"/><text x="1412" y="47" style="fill:#777">/</text><text x="1430" y="47" style="fill:#777">/</text>
<use href="#srch" x="1472.300" y="32"/><text class="dis" x="1481" y="47" textLength="23.400">検索</text>
<use href="#tools" x="1101.300" y="60"/>

<rect class="pn" x="1129.500" y="59.500" width="469" height="473.500"/>
<path d="M1129.500 74.500H1598.500M1129.500 103.500H1598.500" stroke="#b8b8b8"/>
<path class="sep" d="M1129 537.500H1599M1129 696.500H1599"/>
<rect class="pn" x="1129.500" y="542.700" width="469" height="149.500"/>
<rect class="pn" x="1129.500" y="701.700" width="469" height="165.500"/>
<path d="M1129.500 851.700H1598.500" stroke="#b8b8b8"/>
<rect x="1130.400" y="103.500" width="93.300" height="13.500" fill="#2f4a72"/>
<g fill="#000"><rect x="1133" y="117" width="400" height="412.700"/><rect x="1133" y="556" width="400" height="133"/><rect x="1133" y="715" width="400" height="132.700"/></g>
<g fill="url(#g)"><rect x="1133" y="117" width="400" height="412.700"/><rect x="1133" y="556" width="400" height="133"/><rect x="1133" y="715" width="400" height="132.700"/></g>
<g clip-path="url(#c3)"><g transform="translate(1090,0) scale(.33356,.333333)">
<path class="v2" d="M187 351V2544M259 351V2544M331 351V2544M403 351V2544M559 351V2544M631 351V2544M703 351V2544M775 351V2544M930 351V2544M1002 351V2544M1074 351V2544M1146 351V2544"/>
<path class="v1" d="M151 351V2544M223 351V2544M295 351V2544M367 351V2544M439 351V2544M523 351V2544M595 351V2544M667 351V2544M739 351V2544M811 351V2544M894 351V2544M966 351V2544M1038 351V2544M1110 351V2544M1182 351V2544"/>
<path class="vy" d="M464 351V2544M835 351V2544"/>
<path class="rw" d="M145 1130V1180M169 1095V1175M193 1100V1210M205 1065V1180M218 995V1180M229 995V1085M253 995V1080M301 1010V1135M325 1060V1140M361 1100V1180M373 995V1095M385 1000V1075M445 838V900M553 900V955M578 865V945M590 815V880M649 770V855M661 765V830M685 740V795M757 960V1012M949 1000V1125M997 970V1055M1129 1268V1285M1177 1295V1360M1200 1085V1165M518 900V980M480 900V980"/>
<path class="bw" d="M135 1070V1220M157 1060V1180M181 1095V1180M241 1000V1090M265 990V1075M277 1040V1135M289 1050V1150M313 1045V1150M337 1040V1140M349 1040V1155M397 1010V1100M458 870V900M530 845V912M505 900V980M673 720V820M721 740V900M793 930V980M805 930V985M961 970V1025M1093 1130V1245M1153 1272V1315M1165 1298V1375"/>
<path class="bb" d="M135 1090V1215M157 1135V1155M181 1100V1165M241 1040V1060M265 1005V1045M277 1050V1100M289 1097V1110M313 1060V1105M337 1085V1105M349 1110V1150M397 1015V1065M409 1065V1090M470 885V900M482 885V925M505 900V945M530 880V912M542 890V900M600 815V875M673 760V820M697 785V800M721 800V945M735 860V940M745 940V1000M769 950V960M781 965V975M793 965V980M805 970V985M817 985V1035M877 1000V1045M889 1020V1045M901 1045V1065M925 1060V1070M961 1000V1025M973 1010V1025M985 1030V1050M1009 1030V1040M1021 1040V1070M1033 1070V1130M1045 1125V1180M1057 1175V1185M1069 1185V1195M1093 1185V1235M1105 1230V1245M1117 1245V1270M1153 1272V1300M1165 1298V1315"/>
<path class="rb" d="M145 1135V1165M169 1097V1170M193 1145V1165M205 1080V1150M218 1080V1090M229 1040V1080M253 1005V1065M301 1065V1105M325 1085V1105M361 1115V1150M373 1020V1090M385 1015V1025M421 1060V1090M433 955V1065M445 900V955M470 900V922M518 875V945M553 900V918M578 865V920M590 815V915M613 860V885M625 850V870M637 845V855M649 800V855M661 765V830M685 775V795M709 785V795M757 960V990M829 1030V1040M841 1035V1070M853 1000V1040M865 1000V1005M913 1060V1068M937 1065V1075M949 1000V1065M997 1030V1055M1081 1185V1195M1129 1268V1275M1141 1265V1272M1177 1295V1312M1188 1140V1295M1200 1085V1140"/>
<polyline class="l b2" points="133,452 150,490 180,610 218,805 250,840 285,905 300,925 335,970 360,972 385,955 425,950 440,900 470,800 510,765 530,725 555,708 590,697 615,725 650,700 680,702 740,695 750,678 800,655 830,622 870,622 895,632 930,720 970,900 985,905 1025,935 1060,885 1095,855 1165,828 1185,838 1200,860"/>
<polyline class="l a" points="133,608 150,650 218,888 240,905 270,950 300,965 330,1000 345,1020 380,1000 425,995 440,960 460,880 525,820 590,790 610,795 680,750 720,750 760,737 805,730 830,715 860,715 900,740 940,840 960,900 975,930 1030,968 1090,932 1150,935 1185,945 1200,960"/>
<polyline class="l m" points="133,920 150,950 190,1020 220,1055 260,1075 310,1085 370,1100 420,1090 465,1040 510,1025 545,1000 590,970 615,935 660,897 680,875 720,862 760,865 800,875 840,900 880,925 920,960 960,1005 1000,1025 1030,1040 1090,1080 1130,1125 1170,1160 1200,1170"/>
<polyline class="l a" points="133,1230 150,1270 190,1255 218,1217 250,1213 300,1192 325,1192 340,1180 375,1190 410,1172 435,1172 470,1197 515,1207 545,1185 580,1160 610,1085 635,1065 670,978 720,975 760,1000 800,1025 840,1085 895,1140 925,1150 950,1125 970,1095 1020,1090 1045,1165 1085,1210 1125,1305 1165,1378 1200,1372"/>
<polyline class="l b2" points="133,1383 150,1400 170,1380 190,1370 218,1300 260,1270 295,1243 325,1242 338,1225 375,1237 420,1213 440,1230 470,1280 520,1300 550,1280 590,1230 615,1155 635,1138 670,1030 725,1030 800,1105 840,1180 900,1242 925,1242 945,1210 970,1130 1025,1125 1060,1205 1100,1320 1175,1490 1200,1473"/>
<polyline class="l p" points="133,1080 150,1115 185,1145 215,1115 240,1070 262,1050 290,1070 320,1090 365,1115 395,1075 430,1045 450,980 480,910 520,915 590,895 650,850 680,800 710,785 735,840 755,900 770,950 810,985 840,1020 880,1018 920,1060 960,1040 985,1020 1025,1035 1060,1110 1100,1200 1135,1250 1165,1285 1180,1290 1200,1230"/>
<polyline class="l rs" points="133,1955 145,1937 160,1940 170,1908 182,1933 195,1922 205,1890 228,1865 240,1872 253,1842 270,1885 290,1898 300,1875 312,1895 325,1885 340,1905 350,1915 365,1875 375,1832 385,1830 395,1860 410,1880 425,1855 440,1787 470,1787 478,1800 505,1838 518,1803 530,1810 542,1840 575,1840 585,1800 590,1785 597,1828 625,1812 640,1812 650,1790 660,1768 675,1795 690,1795 710,1820 725,1900 745,1948 770,1918 805,1933 815,1962 840,1962 850,1912 865,1908 900,1955 925,1952 937,1950 948,1860 965,1875 985,1910 995,1885 1015,1910 1040,1978 1065,1985 1080,1975 1095,1995 1115,2008 1140,2005 1165,2020 1178,1980 1188,1825 1200,1800 1205,1780"/>
<g transform="translate(0,1800)">
<polyline class="l rl" points="133,93 160,93 185,93 205,85 250,80 285,88 340,88 360,80 400,82 440,65 480,65 505,70 520,60 540,67 580,67 590,58 640,58 660,50 715,55 735,72 800,75 840,85 855,78 890,88 930,85 950,75 990,82 1040,98 1080,102 1115,112 1150,115 1175,113 1188,85 1200,75"/>
<path class="h" d="M171 467V457M183 467V457M195 467V453M207 467V443M219 467V432M231 467V423M243 467V420M255 467V415M267 467V418M279 467V425M291 467V430M303 467V430M315 467V435M327 467V437M339 467V442M351 467V447M363 467V447M375 467V437M387 467V433M399 467V437M411 467V440M423 467V440M435 467V430M447 467V420M459 467V413M471 467V412M483 467V418M495 467V428M507 467V432M519 467V433M531 467V438M543 467V445M555 467V450M567 467V453M579 467V455M591 467V453M603 467V453M615 467V455M627 467V457M639 467V457M651 467V453M663 467V451M675 467V451M687 467V453M699 467V457M711 467V460M735 467V485M747 467V497M759 467V503M771 467V505M783 467V505M795 467V505M807 467V505M819 467V503M831 467V500M843 467V497M855 467V490M867 467V487M879 467V487M891 467V485M903 467V485M915 467V483M927 467V480M939 467V477M963 467V465M975 467V465M987 467V465M999 467V465M1011 467V465M1035 467V472M1047 467V482M1059 467V487M1071 467V488M1083 467V490M1095 467V490M1107 467V492M1119 467V490M1131 467V490M1143 467V487M1155 467V487M1167 467V485M1179 467V483M1191 467V463M1201 467V442"/>
<path class="h" style="stroke-width:1" d="M133 467H1205"/>
<polyline class="l mr" points="133,708 155,708 170,695 195,685 220,650 250,600 265,585 295,573 325,560 360,558 385,525 420,513 440,480 465,435 490,425 530,408 580,415 595,405 640,400 665,385 695,380 720,395 750,445 790,480 840,520 880,520 935,538 970,520 1015,515 1040,535 1070,555 1085,562 1125,587 1175,598 1200,550"/>
<polyline class="l mc" points="133,708 160,708 210,690 270,625 330,583 370,565 395,550 430,530 470,490 510,450 555,427 610,415 660,400 700,390 730,395 780,440 835,480 860,495 930,522 985,520 1030,520 1060,530 1120,560 1175,583 1200,575"/>
</g></g></g>
<path class="pl" d="M1133 361.500H1532"/>
<rect x="1533.500" y="352.500" width="64.500" height="18" fill="#f79a2e" stroke="#e8801a"/>
<text x="1547.600" y="366.200" textLength="35.400" style="fill:#fff">126.883</text>
<text class="lo" x="1292.800" y="240" textLength="44">130.040</text>
<text class="lg" x="1456.900" y="475" textLength="43.400">124.355</text><text class="lg" x="1134.400" y="421" textLength="22.400">.767</text>
<text x="1133.700" y="72.300" textLength="89">2015/02/02 16:00</text><text x="1230.800" y="72.300" textLength="63.700">始値:126.759</text><text x="1302.800" y="72.300" textLength="63.700">高値:126.818</text><text x="1374.900" y="72.300" textLength="63.700">安値:125.767</text><text x="1446.900" y="72.300" textLength="63.400">終値:126.194</text>
<text x="1135" y="86.300" textLength="75.700">単純移動平均:</text><text class="pu" x="1216.800" y="86.300" textLength="76">短期[5]126.960</text><text class="or" x="1301.100" y="86.300" textLength="81.400">長期[21]128.310</text>
<text x="1135" y="100.300" textLength="84.400" lengthAdjust="spacingAndGlyphs">ボリンジャーバンド:</text><text class="bl" x="1225.800" y="100.300" textLength="94">基準線[21]128.310</text><text class="ba" x="1328.500" y="100.300" textLength="108.700">偏差A上[2.00]131.001</text><text class="ba" x="1445.900" y="100.300" textLength="109.400">偏差A下[2.00]125.620</text><g clip-path="url(#k4)"><text class="bb2" x="1564.300" y="100.300" textLength="44">偏差B上</text></g>
<text class="wt" x="1130.700" y="115" textLength="88.700">2015/02/02 16:00</text><text x="1233.800" y="115" textLength="29">02/07</text><text x="1286.800" y="115" textLength="28.700">02/11</text><text x="1334.800" y="115" textLength="28.700">02/13</text><text x="1366.500" y="115" textLength="28.700">02/16</text><text x="1411.500" y="115" textLength="28.700">02/18</text><text x="1459.600" y="115" textLength="29">02/20</text>
<text x="1547.600" y="130.200" textLength="35.400">133.000</text><text x="1547.600" y="168.200" textLength="35.400">132.000</text><text x="1547.600" y="207.200" textLength="35.400">131.000</text><text x="1547.600" y="245.200" textLength="35.400">130.000</text><text x="1547.600" y="283.800" textLength="35.400">129.000</text><text x="1547.600" y="321.800" textLength="35.400">128.000</text><text x="1547.600" y="399.200" textLength="35.400">126.000</text><text x="1547.600" y="438.200" textLength="35.400">125.000</text><text x="1547.600" y="476.200" textLength="35.400">124.000</text><text x="1547.600" y="514.200" textLength="35.400">123.000</text>
<text x="1135.700" y="554" textLength="20.300">RSI:</text><text class="pu" x="1163" y="554" textLength="75.400">短期[9]28.5609</text><text class="or" x="1247.400" y="554" textLength="81.400">長期[42]43.4049</text>
<text x="1559.600" y="599.200" textLength="11">70</text><text x="1559.600" y="626.200" textLength="11">50</text><text x="1559.600" y="653.200" textLength="11">30</text>
<text x="1135.700" y="713" textLength="36">MACD:</text><text class="red" x="1178.700" y="713" textLength="119.700">MACD[12-26]-126.2005</text><text class="cy" x="1306.800" y="713" textLength="101.700" lengthAdjust="spacingAndGlyphs">シグナル[9]-125.1802</text><text class="gy" x="1416.900" y="713" textLength="61.700">乖離-1.0203</text>
<text x="1546.300" y="727.200" textLength="37.400">50.0000</text><text x="1549.600" y="758.800" textLength="30.700">0.0000</text><text x="1542.600" y="790.800" textLength="44.400">-50.0000</text><text x="1539.300" y="823.800" textLength="50.400">-100.0000</text><text clip-path="url(#k3)" x="1548.600" y="853.500" textLength="40">150.0000</text>
<text x="1133.700" y="864.500" textLength="25.700">始値:</text><text x="1209.400" y="864.500" textLength="26.400">高値:</text><text x="1285.800" y="864.500" textLength="26">安値:</text><text x="1361.800" y="864.500" textLength="63.400">終値:126.883</text>
<g stroke="#bcbcbc"><rect x="1430.200" y="852" width="16" height="15" fill="url(#bg)"/><rect x="1446.200" y="852" width="27.400" height="15" fill="url(#lg)" stroke="none"/><rect x="1473.600" y="852" width="13.400" height="15" fill="url(#bg)"/><rect x="1487" y="852" width="8.300" height="15" fill="#fff" stroke="none"/><rect x="1495.300" y="852" width="16.700" height="15" fill="url(#bg)"/><rect x="1512" y="852" width="22.300" height="15" fill="#fff" stroke="none"/><rect x="1534.300" y="852" width="16" height="15" fill="url(#bg)"/><rect x="1566.300" y="852" width="16.400" height="15" fill="url(#bg)"/><rect x="1582.700" y="852" width="16" height="15" fill="url(#bg)"/></g>
<path d="M1441 855.500l-6 4.500 6 4.500zM1500.500 855.500l6 4.500-6 4.500zM1538.500 856.500h8l-4 7z" fill="#444"/><path d="M1570 858h3v-3h2v3h3v2.500h-3v3h-2v-3h-3zM1586.500 858.500h8v2.500h-8z" fill="#333"/>
<text x="1515.300" y="864.500" textLength="16.700">100</text>
</svg>
</body></html>
